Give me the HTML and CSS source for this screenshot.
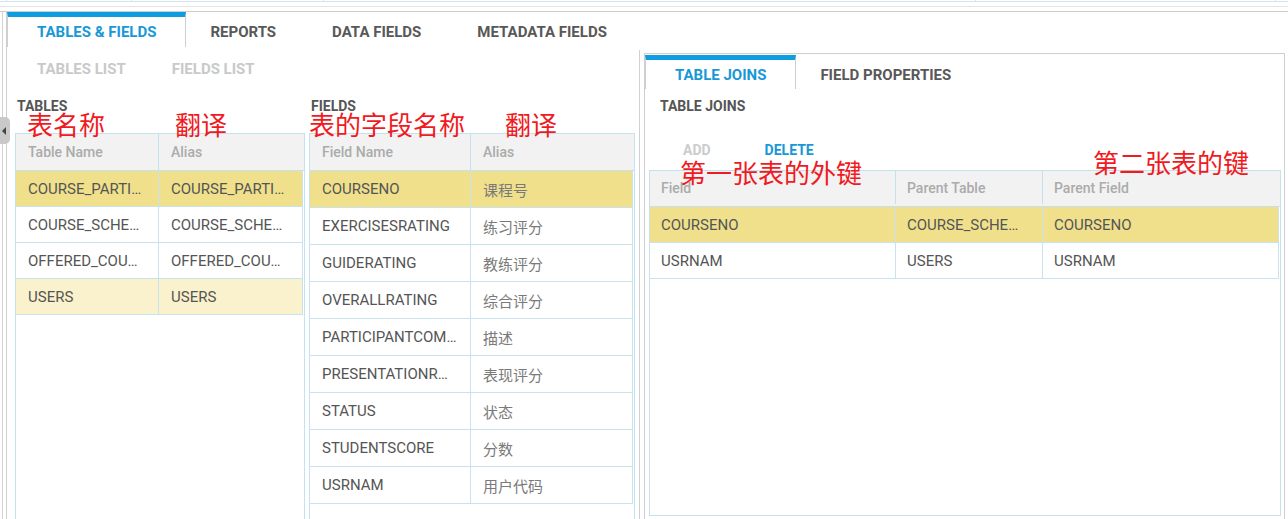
FILE: index.html
```html
<!DOCTYPE html>
<html lang="zh-CN">
<head>
<meta charset="utf-8">
<title>Tables &amp; Fields</title>
<link rel="stylesheet" href="styles.css">
</head>
<body>
<div class="topbar">
  <span class="seg seg-1"></span><span class="seg seg-2"></span><span class="seg seg-3"></span><span class="seg seg-4"></span><span class="seg seg-5"></span>
</div>
<div class="rule rule-light"></div>
<div class="rule rule-dark"></div>

<div class="workspace">
  <div class="shell">
    <div class="tabs main-tabs">
      <div class="tab active">TABLES &amp; FIELDS</div>
      <div class="tab">REPORTS</div>
      <div class="tab">DATA FIELDS</div>
      <div class="tab">METADATA FIELDS</div>
    </div>
    <div class="content">
      <div class="left-pane">
        <div class="subtabs">
          <span class="subtab">TABLES LIST</span>
          <span class="subtab">FIELDS LIST</span>
        </div>
        <div class="lists">
          <div class="list list-tables">
            <div class="label">TABLES</div>
            <div class="grid grid-tables">
              <div class="ghead">
                <div class="c c1">Table Name</div>
                <div class="c c2">Alias</div>
              </div>
              <div class="row sel">
                <div class="c c1">COURSE_PARTI…</div>
                <div class="c c2">COURSE_PARTI…</div>
              </div>
              <div class="row">
                <div class="c c1">COURSE_SCHE…</div>
                <div class="c c2">COURSE_SCHE…</div>
              </div>
              <div class="row">
                <div class="c c1">OFFERED_COU…</div>
                <div class="c c2">OFFERED_COU…</div>
              </div>
              <div class="row hov">
                <div class="c c1">USERS</div>
                <div class="c c2">USERS</div>
              </div>
            </div>
          </div>
          <div class="list list-fields">
            <div class="label">FIELDS</div>
            <div class="grid grid-fields">
              <div class="ghead">
                <div class="c c1">Field Name</div>
                <div class="c c2">Alias</div>
              </div>
              <div class="row sel"><div class="c c1">COURSENO</div><div class="c c2 zh">课程号</div></div>
              <div class="row"><div class="c c1">EXERCISESRATING</div><div class="c c2 zh">练习评分</div></div>
              <div class="row"><div class="c c1">GUIDERATING</div><div class="c c2 zh">教练评分</div></div>
              <div class="row"><div class="c c1">OVERALLRATING</div><div class="c c2 zh">综合评分</div></div>
              <div class="row"><div class="c c1">PARTICIPANTCOM…</div><div class="c c2 zh">描述</div></div>
              <div class="row"><div class="c c1">PRESENTATIONR…</div><div class="c c2 zh">表现评分</div></div>
              <div class="row"><div class="c c1">STATUS</div><div class="c c2 zh">状态</div></div>
              <div class="row"><div class="c c1">STUDENTSCORE</div><div class="c c2 zh">分数</div></div>
              <div class="row"><div class="c c1">USRNAM</div><div class="c c2 zh">用户代码</div></div>
            </div>
          </div>
        </div>
      </div>

      <div class="right-pane">
        <div class="panel">
          <div class="tabs inner-tabs">
            <div class="tab active">TABLE JOINS</div>
            <div class="tab">FIELD PROPERTIES</div>
          </div>
          <div class="label panel-label">TABLE JOINS</div>
          <div class="actions">
            <span class="action disabled">ADD</span>
            <span class="action primary">DELETE</span>
          </div>
          <div class="grid grid-joins">
            <div class="ghead">
              <div class="c c1">Field</div>
              <div class="c c2">Parent Table</div>
              <div class="c c3">Parent Field</div>
            </div>
            <div class="row sel">
              <div class="c c1">COURSENO</div>
              <div class="c c2">COURSE_SCHE…</div>
              <div class="c c3">COURSENO</div>
            </div>
            <div class="row">
              <div class="c c1">USRNAM</div>
              <div class="c c2">USERS</div>
              <div class="c c3">USRNAM</div>
            </div>
          </div>
        </div>
      </div>
    </div>
  </div>
</div>

<div class="handle"><span class="arrow"></span></div>

<div class="note n1">表名称</div>
<div class="note n2">翻译</div>
<div class="note n3">表的字段名称</div>
<div class="note n4">翻译</div>
<div class="note n5">第一张表的外键</div>
<div class="note n6">第二张表的键</div>
</body>
</html>
```

FILE: styles.css
```css
* { box-sizing: border-box; }

html, body {
  margin: 0;
  padding: 0;
}

body {
  position: relative;
  width: 1288px;
  height: 519px;
  overflow: hidden;
  background: #ffffff;
  color: #555555;
  font-family: Roboto, "Noto Sans CJK SC", sans-serif;
}

/* top strips */
.topbar {
  display: flex;
  height: 2px;
  border-bottom: 1px solid #cfe6f0;
}
.seg {
  height: 1px;
  border-right: 1px solid #cfe6f0;
  box-sizing: content-box;
}
.seg-1 { width: 6px; }
.seg-2 { width: 124px; }
.seg-3 { width: 191px; }
.seg-4 { width: 651px; }
.seg-5 { width: 299px; }

.rule {
  height: 5px;
}
.rule-light { border-bottom: 1px solid #e4e4e4; }
.rule-dark { border-bottom: 1px solid #cdcdcd; }

/* workspace */
.workspace {
  display: flex;
  height: 507px;
  margin-left: 2px;
  padding-left: 3px;
  border-left: 1px solid #d3d3d3;
}
.shell {
  flex: 1;
  display: flex;
  flex-direction: column;
  border-left: 1px solid #cfcfcf;
}

/* tabs */
.tabs {
  display: flex;
  flex: none;
}
.main-tabs { height: 35px; }
.inner-tabs { height: 34px; }

.tab {
  display: flex;
  align-items: center;
  padding: 0 23px;
  border: 1px solid transparent;
  border-top: 5px solid transparent;
  border-bottom: 0;
  font-size: 15px;
  font-weight: 700;
  color: #585858;
  white-space: nowrap;
}
.tab:not(.active) + .tab { margin-left: 8px; }
.tab.active {
  padding: 0 29px;
  border-color: #cfcfcf;
  border-top-color: #0e9ddf;
  color: #1898d6;
}

.content {
  flex: 1;
  display: flex;
  min-height: 0;
}

/* left pane */
.left-pane {
  width: 633px;
  flex: none;
  margin-top: 3px;
  padding: 0 4px 0 8px;
  border-right: 1px solid #d0d0d0;
}
.subtabs {
  display: flex;
  align-items: center;
  gap: 46px;
  height: 37px;
  padding-left: 22px;
}
.subtab {
  font-size: 15px;
  font-weight: 700;
  color: #c9c9c9;
  white-space: nowrap;
}

.lists {
  display: flex;
  gap: 4px;
}
.list-tables { width: 290px; flex: none; }
.list-fields { width: 326px; flex: none; }

.label {
  height: 20px;
  line-height: 20px;
  margin-top: 9px;
  padding-left: 2px;
  font-size: 14px;
  font-weight: 700;
  color: #555555;
}

/* grids */
.grid {
  border: 1px solid #c3e1ee;
  background: #ffffff;
}
.list .grid {
  margin-top: 17px;
  height: 420px;
}

.ghead {
  display: flex;
  height: 37px;
  background: #f2f2f2;
  border-bottom: 1px solid #c3e1ee;
  font-size: 14px;
  font-weight: 500;
  color: #ababab;
}
.row {
  display: flex;
  height: 36px;
  margin-right: 1px;
  border-bottom: 1px solid #c6e3ef;
  border-right: 1px solid #c6e3ef;
  font-size: 15px;
  color: #555555;
}
.grid-fields .row { height: 37px; }

.row.sel { background: #f0e08c; }
.row.hov { background: #faf2cc; }

.c {
  display: flex;
  align-items: center;
  padding-left: 12px;
  overflow: hidden;
  white-space: nowrap;
}
.c1, .c2 { border-right: 1px solid #c6e3ef; }
.ghead .c1, .ghead .c2 { border-right-color: #c3e1ee; }
.c2:last-child { border-right: 0; flex: 1; }
.c3 { flex: 1; }

.grid-tables .c1 { width: 143px; flex: none; }
.grid-fields .c1 { width: 161px; flex: none; }
.zh {
  color: #7a7a7a;
  font-family: "Noto Sans CJK SC", sans-serif;
  font-size: 15px;
}

/* right pane */
.right-pane {
  flex: 1;
  padding: 6px 3px 0 4px;
}
.panel {
  height: 100%;
  padding-top: 1px;
  border: 1px solid #cfcfcf;
  border-bottom: 0;
}
.panel-label {
  margin-top: 7px;
  padding-left: 15px;
}
.actions {
  display: flex;
  align-items: center;
  gap: 54px;
  height: 20px;
  margin-top: 24px;
  padding-left: 38px;
}
.action {
  font-size: 14px;
  font-weight: 700;
}
.action.disabled { color: #cccccc; }
.action.primary { color: #1898d6; }

.grid-joins {
  height: 346px;
  margin: 10px 3px 0 4px;
}
.grid-joins .ghead { height: 36px; padding-bottom: 2px; }
.grid-joins .c { padding-left: 11px; }
.grid-joins .c1 { width: 246px; flex: none; }
.grid-joins .c2 { width: 147px; flex: none; }

/* splitter handle */
.handle {
  position: absolute;
  left: 0;
  top: 117px;
  width: 10px;
  height: 27px;
  background: #c9c9c9;
  border-radius: 0 5px 5px 0;
}
.arrow {
  position: absolute;
  left: 2px;
  top: 10px;
  width: 0;
  height: 0;
  border-top: 4px solid transparent;
  border-bottom: 4px solid transparent;
  border-right: 4px solid #444444;
}

/* red annotations drawn over the screenshot */
.note {
  position: absolute;
  font-family: "Noto Sans CJK SC", sans-serif;
  font-size: 26px;
  line-height: 26px;
  color: #f01a22;
  white-space: nowrap;
}
.n1 { left: 27px; top: 111px; }
.n2 { left: 175px; top: 111px; }
.n3 { left: 309px; top: 111px; }
.n4 { left: 505px; top: 111px; }
.n5 { left: 680px; top: 159px; }
.n6 { left: 1093px; top: 149px; }
```
